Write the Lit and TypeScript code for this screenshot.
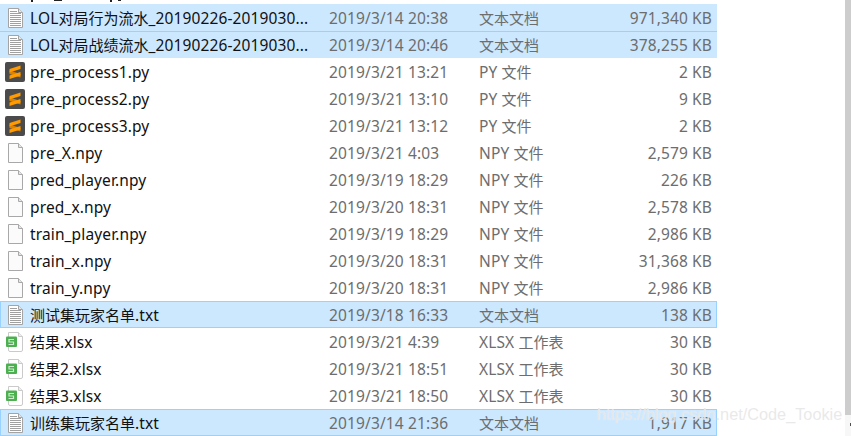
import { LitElement, html, css, svg } from "lit";
import { customElement } from "lit/decorators.js";

type Kind = "txt" | "py" | "npy" | "xlsx";
type Row = { name: string; date: string; type: string; size: string; kind: Kind; sel?: "plain" | "top" | "box" };

const rows: Row[] = [
  { name: "LOL对局行为流水_20190226-2019030...", date: "2019/3/14 20:38", type: "文本文档", size: "971,340 KB", kind: "txt", sel: "plain" },
  { name: "LOL对局战绩流水_20190226-2019030...", date: "2019/3/14 20:46", type: "文本文档", size: "378,255 KB", kind: "txt", sel: "top" },
  { name: "pre_process1.py", date: "2019/3/21 13:21", type: "PY 文件", size: "2 KB", kind: "py" },
  { name: "pre_process2.py", date: "2019/3/21 13:10", type: "PY 文件", size: "9 KB", kind: "py" },
  { name: "pre_process3.py", date: "2019/3/21 13:12", type: "PY 文件", size: "2 KB", kind: "py" },
  { name: "pre_X.npy", date: "2019/3/21 4:03", type: "NPY 文件", size: "2,579 KB", kind: "npy" },
  { name: "pred_player.npy", date: "2019/3/19 18:29", type: "NPY 文件", size: "226 KB", kind: "npy" },
  { name: "pred_x.npy", date: "2019/3/20 18:31", type: "NPY 文件", size: "2,578 KB", kind: "npy" },
  { name: "train_player.npy", date: "2019/3/19 18:29", type: "NPY 文件", size: "2,986 KB", kind: "npy" },
  { name: "train_x.npy", date: "2019/3/20 18:31", type: "NPY 文件", size: "31,368 KB", kind: "npy" },
  { name: "train_y.npy", date: "2019/3/20 18:31", type: "NPY 文件", size: "2,986 KB", kind: "npy" },
  { name: "测试集玩家名单.txt", date: "2019/3/18 16:33", type: "文本文档", size: "138 KB", kind: "txt", sel: "box" },
  { name: "结果.xlsx", date: "2019/3/21 4:39", type: "XLSX 工作表", size: "30 KB", kind: "xlsx" },
  { name: "结果2.xlsx", date: "2019/3/21 18:51", type: "XLSX 工作表", size: "30 KB", kind: "xlsx" },
  { name: "结果3.xlsx", date: "2019/3/21 18:50", type: "XLSX 工作表", size: "30 KB", kind: "xlsx" },
  { name: "训练集玩家名单.txt", date: "2019/3/14 21:36", type: "文本文档", size: "1,917 KB", kind: "txt", sel: "box" },
];

const page = (fill: string, stroke: string) =>
  svg`<path d="M3.5 .5H13.5L17.5 4.5V19.5H3.5Z" fill="${fill}" stroke="${stroke}"/><path d="M13.5 .5V4.5H17.5" fill="#e6e6e6" stroke="${stroke}"/>`;

function icon(k: Kind) {
  if (k === "txt")
    return html`<svg class="ic" viewBox="0 0 20 20">${page("#fff", "#a4a4a4")}
      <path d="M5 3.5H12M5 5.5H16M5 7.5H16M5 9.5H16M5 11.5H16M5 13.5H16M5 15.5H16M5 17.5H16" stroke="#a0a0a0" fill="none"/></svg>`;
  if (k === "py")
    return html`<svg class="ic" viewBox="0 0 20 20"><rect width="20" height="20" rx="2" fill="#4b4b4b"/>
      <path d="M4.5 8.5 15.5 12V15.5L4.5 12Z" fill="#d98305"/>
      <path d="M15.5 3.5 4.5 7V10.5L15.5 7Z" fill="#ff9a00"/>
      <path d="M15.5 10 4.5 13.5V17L15.5 13.5Z" fill="#ff9a00"/></svg>`;
  if (k === "npy")
    return html`<svg class="ic" viewBox="0 0 20 20">${page("#fbfbfb", "#a8a8a8")}</svg>`;
  return html`<svg class="ic" viewBox="0 0 20 20">
    <path d="M3.5 .5H13.5L17.5 4.5V18A1.5 1.5 0 0 1 16 19.5H5A1.5 1.5 0 0 1 3.5 18Z" fill="#fff" stroke="#cacaca"/>
    <path d="M13.5 .5V4.5H17.5" fill="#eee" stroke="#cacaca"/>
    <rect x="1" y="4.5" width="11" height="10.5" rx="1" fill="#4caf50"/>
    <path d="M9 7.5H4V10H8.5V12.5H3.5" stroke="#cdeccd" stroke-width="1.2" fill="none"/></svg>`;
}

// CJK runs are set slightly smaller than Latin runs, as in the mixed-metric reference font.
function mixed(text: string) {
  return text.split(/([\u4e00-\u9fff]+)/).map((part, i) =>
    i % 2 ? html`<span class="cjk">${part}</span>` : part);
}

@customElement("app-root")
export class AppRoot extends LitElement {
  static styles = css`
    :host { display: block; width: 851px; height: 436px; overflow: hidden; background: #fff; position: relative;
      font-family: "Noto Sans", "Noto Sans CJK SC", sans-serif; font-size: 15.5px; letter-spacing: .13px; color: #111; }
    .list { width: 717px; }
    .clip { display: block; width: 130px; height: 4px; }
    .row { display: grid; grid-template-columns: 30px 299px 150px 120px 1fr; height: 27px; align-items: center; box-sizing: border-box; white-space: nowrap; }
    .row.plain, .row.top, .row.box { background: #cce8ff; }
    .row.top { box-shadow: inset 0 1px 0 #99d1ff; }
    .row.box { box-shadow: inset 0 0 0 1px #99d1ff; }
    .iw { display: flex; padding-left: 5px; }
    .ic { width: 20px; height: 20px; display: block; }
    .name, .date, .type, .size { line-height: 27px; padding-top: 1px; }
    .cjk { font-size: 15px; letter-spacing: 0; }
    .date, .type, .size { color: #6d6d6d; }
    .size { text-align: right; padding-right: 5px; }
    .rail { position: absolute; right: 0; top: 0; width: 6px; height: 436px; background: #f7f7f7; }
    .thumb { width: 6px; height: 415px; background: #cdcdcd; }
    .arrow { position: absolute; left: 5px; top: 423px; width: 1px; height: 3px; background: #505050; }
    .mark { position: absolute; left: 597px; top: 405px; font: 16.3px "Liberation Sans", sans-serif; letter-spacing: 0; color: rgba(228,228,228,.8); text-shadow: 0 0 1px rgba(255,255,255,.6); }
  `;
  render() {
    return html`<div class="list">
      <svg class="clip" viewBox="0 0 130 4"><path d="M31 0h2v2h-2ZM54 0h8v1h-8ZM110 0h2v2h-2ZM118 0h3v1h-3Z" fill="#222"/></svg>
      ${rows.map(r => html`<div class="row ${r.sel ?? ""}">
        <div class="iw">${icon(r.kind)}</div><div class="name">${mixed(r.name)}</div><div class="date">${r.date}</div><div class="type">${mixed(r.type)}</div><div class="size">${r.size}</div></div>`)}
    </div>
    <div class="rail"><div class="thumb"></div><div class="arrow"></div></div>
    <div class="mark">https://blog.csdn.net/Code_Tookie</div>`;
  }
}
